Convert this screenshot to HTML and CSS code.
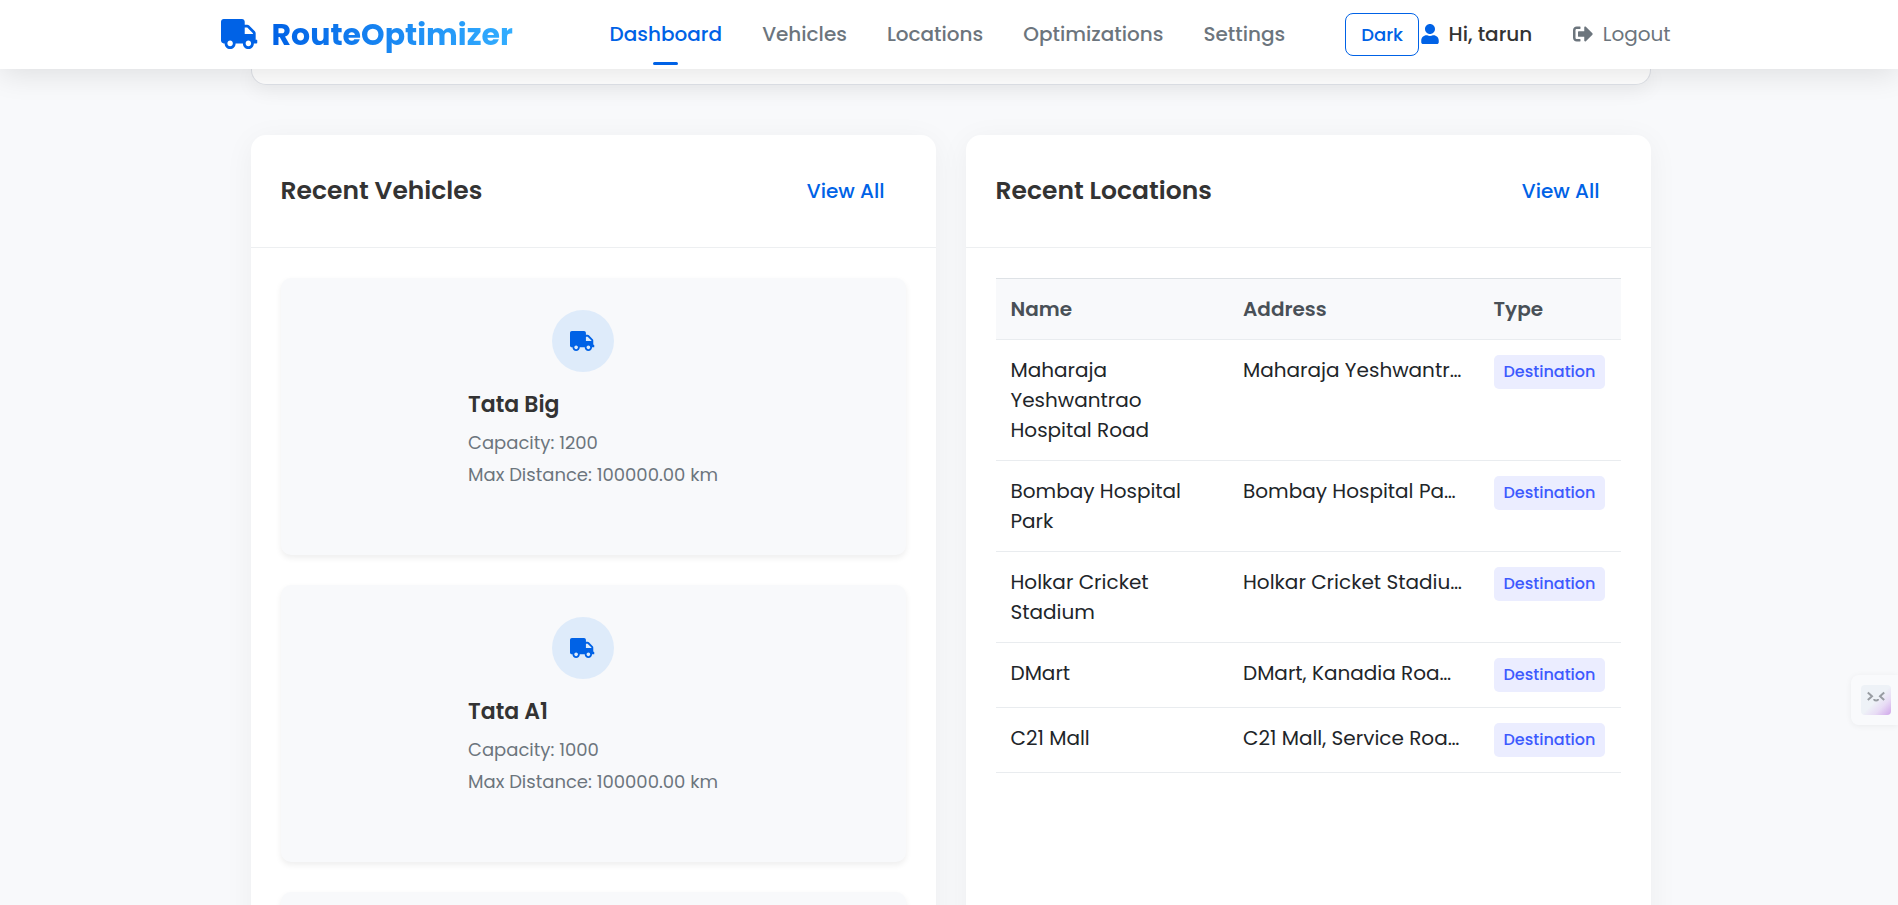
FILE: index.html
```html
<!DOCTYPE html>
<html lang="en">
<head>
<meta charset="utf-8">
<title>RouteOptimizer</title>
<link rel="stylesheet" href="styles.css">
</head>
<body>
<svg class="sprite" aria-hidden="true">
  <symbol id="truck" viewBox="0 0 640 512" preserveAspectRatio="none"><path d="M624 352h-16V243.900c0-12.700-5.100-24.900-14.100-33.900L494 110.100c-9-9-21.200-14.100-33.900-14.100H416V48c0-26.500-21.500-48-48-48H48C21.500 0 0 21.500 0 48v320c0 26.500 21.500 48 48 48h16c0 53 43 96 96 96s96-43 96-96h128c0 53 43 96 96 96s96-43 96-96h48c8.800 0 16-7.200 16-16v-32c0-8.800-7.200-16-16-16zM160 464c-26.500 0-48-21.500-48-48s21.500-48 48-48 48 21.500 48 48-21.500 48-48 48zm320 0c-26.500 0-48-21.500-48-48s21.500-48 48-48 48 21.500 48 48-21.500 48-48 48zm80-208H416V144h44.100l99.900 99.900V256z"/></symbol>
  <symbol id="user" viewBox="0 0 448 512"><path d="M224 256c70.700 0 128-57.300 128-128S294.700 0 224 0 96 57.300 96 128s57.300 128 128 128zm89.600 32h-16.700c-22.200 10.200-46.900 16-72.900 16s-50.600-5.800-72.900-16h-16.700C60.200 288 0 348.200 0 422.400V464c0 26.500 21.500 48 48 48h352c26.500 0 48-21.500 48-48v-41.600c0-74.200-60.200-134.400-134.400-134.400z"/></symbol>
  <symbol id="logout" viewBox="0 0 512 512"><path d="M497 273L329 441c-15 15-41 4.500-41-17v-96H152c-13.300 0-24-10.700-24-24v-96c0-13.300 10.700-24 24-24h136V88c0-21.400 25.900-32 41-17l168 168c9.300 9.400 9.300 24.600 0 34zM192 436v-40c0-6.600-5.400-12-12-12H96c-17.700 0-32-14.300-32-32V160c0-17.700 14.300-32 32-32h84c6.600 0 12-5.400 12-12V76c0-6.600-5.400-12-12-12H96c-53 0-96 43-96 96v192c0 53 43 96 96 96h84c6.600 0 12-5.400 12-12z"/></symbol>
</svg>

<nav class="navbar">
  <a class="brand"><svg class="brand-icon"><use href="#truck"/></svg><span class="brand-name">RouteOptimizer</span></a>
  <div class="nav-links">
    <a class="nav-link active">Dashboard</a>
    <a class="nav-link">Vehicles</a>
    <a class="nav-link">Locations</a>
    <a class="nav-link">Optimizations</a>
    <a class="nav-link">Settings</a>
  </div>
  <div class="nav-user">
    <button class="theme-toggle">Dark</button>
    <span class="greeting"><svg class="user-icon"><use href="#user"/></svg>Hi, tarun</span>
    <a class="logout"><svg class="logout-icon"><use href="#logout"/></svg>Logout</a>
  </div>
</nav>

<main class="container">
  <section class="summary"></section>
  <div class="columns">
    <section class="card">
      <header class="card-header"><h2 class="card-title">Recent Vehicles</h2><a class="view-all">View All</a></header>
      <div class="card-body vehicles">
        <article class="vehicle">
          <span class="vehicle-icon"><svg class="truck-small"><use href="#truck"/></svg></span>
          <div class="vehicle-info"><h3 class="vehicle-name">Tata Big</h3><p class="vehicle-detail">Capacity: 1200</p><p class="vehicle-detail">Max Distance: 100000.00 km</p></div>
        </article>
        <article class="vehicle">
          <span class="vehicle-icon"><svg class="truck-small"><use href="#truck"/></svg></span>
          <div class="vehicle-info"><h3 class="vehicle-name">Tata A1</h3><p class="vehicle-detail">Capacity: 1000</p><p class="vehicle-detail">Max Distance: 100000.00 km</p></div>
        </article>
        <article class="vehicle"></article>
      </div>
    </section>
    <section class="card">
      <header class="card-header"><h2 class="card-title">Recent Locations</h2><a class="view-all">View All</a></header>
      <div class="card-body">
        <div class="table">
          <div class="row head"><span>Name</span><span>Address</span><span>Type</span></div>
          <div class="row"><span>Maharaja Yeshwantrao Hospital Road</span><span class="address">Maharaja Yeshwantr…</span><span class="badge">Destination</span></div>
          <div class="row"><span>Bombay Hospital Park</span><span class="address">Bombay Hospital Pa…</span><span class="badge">Destination</span></div>
          <div class="row"><span>Holkar Cricket Stadium</span><span class="address">Holkar Cricket Stadiu…</span><span class="badge">Destination</span></div>
          <div class="row"><span>DMart</span><span class="address">DMart, Kanadia Roa…</span><span class="badge">Destination</span></div>
          <div class="row"><span>C21 Mall</span><span class="address">C21 Mall, Service Roa…</span><span class="badge">Destination</span></div>
        </div>
      </div>
    </section>
  </div>
</main>

<aside class="assistant">
  <svg class="assistant-face" viewBox="0 0 30 30"><path d="M6.800 7.400L11 11.200L6.800 15M23.200 7.400L19 11.200L23.200 15M13.200 14q0 1.500 1.900 1.500t1.900-1.500"/></svg>
</aside>
</body>
</html>
```
FILE: styles.css
```css
* { box-sizing: border-box; }

html { height: 100%; overflow: hidden; }

body {
  margin: 0;
  height: 100%;
  overflow: hidden;
  background: #f8f9fb;
  color: #212529;
  font: 400 20px/30px Poppins, sans-serif;
}

h2, h3, p { margin: 0; }
svg { display: block; flex: none; fill: currentColor; }
.sprite { display: none; }

.navbar {
  position: relative;
  z-index: 2;
  display: flex;
  align-items: center;
  height: 69px;
  padding-left: 221px;
  background: #fff;
  box-shadow: 0 5px 30px rgba(0, 0, 0, 0.11);
}

.brand { display: flex; align-items: center; gap: 14px; width: 388.600px; padding-bottom: 1px; color: #0062e6; }
.brand-icon { width: 36.500px; height: 30px; }
.brand-name {
  font-size: 30px;
  font-weight: 700;
  line-height: 45px;
  background: linear-gradient(to right, #0062e6, #33aeff);
  background-clip: text;
  -webkit-background-clip: text;
  color: transparent;
}

.nav-links { display: flex; gap: 40px; height: 69px; align-items: center; padding-bottom: 2px; }
.nav-link { position: relative; color: #6c757d; font-weight: 500; }
.nav-link.active { color: #0062e6; }
.nav-link.active::after {
  content: "";
  position: absolute;
  left: 50%;
  bottom: -16px;
  width: 25px;
  height: 3px;
  margin-left: -12.500px;
  border-radius: 3px;
  background: #0062e6;
}

.nav-user { display: flex; align-items: center; margin-left: 60px; }
.theme-toggle {
  height: 43px;
  padding: 0 15px;
  border: 1px solid #0062e6;
  border-radius: 8px;
  background: #fff;
  color: #0062e6;
  font: 500 18px/41px Poppins, sans-serif;
}
.greeting { display: flex; align-items: center; gap: 10px; margin-left: 1.500px; padding-bottom: 2px; color: #333; font-weight: 500; }
.user-icon { width: 18px; height: 20px; color: #0062e6; }
.logout { display: flex; align-items: center; gap: 10px; margin-left: 40.500px; padding-bottom: 2px; color: #6c757d; }
.logout-icon { width: 20px; height: 20px; }

.container { width: 1400px; margin-left: 250.500px; }
.summary {
  height: 15.500px;
  border: 1px solid #dfe2e8;
  border-top: 0;
  border-radius: 0 0 15px 15px;
  background: #fff;
  box-shadow: 0 5px 20px rgba(0, 0, 0, 0.07);
}

.columns { display: grid; grid-template-columns: 1fr 1fr; gap: 30px; margin-top: 50.500px; }
.card { border-radius: 15px; background: #fff; box-shadow: 0 5px 30px rgba(0, 0, 0, 0.05); }
.card-header {
  display: flex;
  align-items: center;
  justify-content: space-between;
  height: 113px;
  padding: 0 30px;
  border-bottom: 1px solid #edeff1;
}
.card-title { color: #333; font-size: 25px; font-weight: 600; line-height: 30px; }
.view-all { padding: 0 21px; color: #0062e6; font-weight: 500; }
.card-body { padding: 30px; }

.vehicles { display: flex; flex-direction: column; gap: 30px; }
.vehicle {
  display: flex;
  flex-direction: column;
  align-items: center;
  height: 277px;
  padding-top: 32px;
  border-radius: 10px;
  background: #f8f9fb;
  box-shadow: 0 3px 6px rgba(0, 0, 0, 0.07);
}
.vehicle-icon {
  display: flex;
  align-items: center;
  justify-content: center;
  width: 62px;
  height: 62px;
  margin-right: 21px;
  border-radius: 50%;
  background: #deebfa;
  color: #0062e6;
}
.truck-small { width: 24.500px; height: 20px; }
.vehicle-info { margin-top: 20px; }
.vehicle-name { margin-bottom: 9px; color: #333; font-size: 22px; font-weight: 600; line-height: 26px; }
.vehicle-detail { color: #6c757d; font-size: 18px; line-height: 32px; }

.row {
  display: grid;
  grid-template-columns: 202.500px 220.500px auto;
  column-gap: 30px;
  align-items: start;
  justify-content: start;
  padding: 15px;
  border-bottom: 1px solid #e9ecef;
}
.row.head { border-top: 1px solid #dee2e6; background: #f8f9fb; color: #495057; font-weight: 600; }
.address { white-space: nowrap; }
.badge {
  padding: 5px 10px;
  border-radius: 5px;
  background: #ebedff;
  color: #3d5afe;
  font-size: 16px;
  font-weight: 500;
  line-height: 24px;
}

.assistant {
  position: fixed;
  top: 675px;
  right: 0;
  width: 47px;
  height: 50px;
  padding: 10px;
  border-radius: 8px 0 0 8px;
  background: #f9fafc;
  box-shadow: 0 1px 6px rgba(0, 0, 0, 0.06);
}
.assistant-face {
  width: 30px;
  height: 30px;
  border-radius: 4px;
  background: linear-gradient(135deg, #eef2f7 50%, #e8dcf5 72%, #cfa6ea 100%);
  fill: none;
  stroke: #999da3;
  stroke-width: 2;
}
```
